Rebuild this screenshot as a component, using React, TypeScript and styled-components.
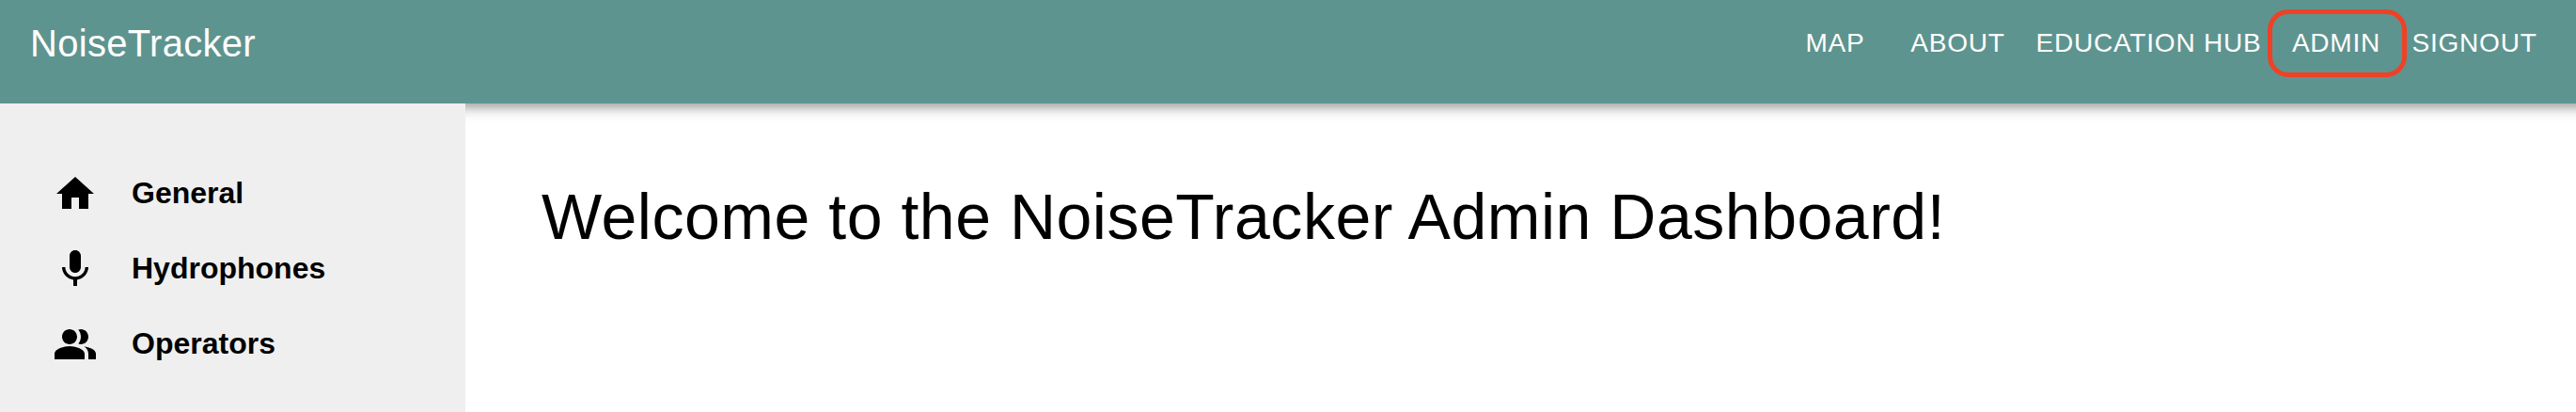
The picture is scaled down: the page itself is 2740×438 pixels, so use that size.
import React from "react";
import styled, { createGlobalStyle } from "styled-components";

const GlobalStyle = createGlobalStyle`
  * { box-sizing: border-box; }
  body {
    margin: 0;
    background: #fff;
    color: #000;
    font-family: "Liberation Sans", Helvetica, Arial, sans-serif;
    overflow: hidden;
  }
`;

const Page = styled.div`
  display: flex;
  flex-direction: column;
  height: 438px;
  overflow: hidden;
`;

const AppBar = styled.header`
  display: flex;
  align-items: flex-start;
  justify-content: space-between;
  height: 110px;
  flex: none;
  margin-right: -24px;
  padding: 10px 48px 0 32px;
  background: #5e948f;
  color: #fff;
  box-shadow: 0 4px 8px -2px rgba(0, 0, 0, 0.2), 0 8px 10px rgba(0, 0, 0, 0.14),
    0 2px 20px rgba(0, 0, 0, 0.12);
`;

const Brand = styled.div`
  font-size: 40px;
  line-height: 72px;
  letter-spacing: 0.3px;
  white-space: nowrap;
`;

const Nav = styled.nav`
  display: flex;
`;

const NavLink = styled.a<{ $width: number }>`
  position: relative;
  width: ${(p) => p.$width}px;
  height: 72px;
  line-height: 72px;
  font-size: 28px;
  letter-spacing: 0.8px;
  text-align: center;
  white-space: nowrap;
`;

const Highlight = styled.span`
  position: absolute;
  inset: 0 -12px 0 -10px;
  border: 5px solid #ee4126;
  border-radius: 22px;
`;

const Body = styled.div`
  display: flex;
  flex: 1;
`;

const Sidebar = styled.aside`
  position: relative;
  z-index: 1;
  width: 495px;
  padding: 56px 0 0 56px;
  background: #efefef;
`;

const MenuItem = styled.div`
  display: flex;
  align-items: center;
  gap: 36px;
  height: 80px;
  font-size: 32px;
  font-weight: 700;
`;

const MenuLabel = styled.span`
  padding-bottom: 2px;
`;

const Icon = styled.svg`
  width: 48px;
  height: 48px;
  fill: #000;
`;

const Main = styled.main`
  flex: 1;
  padding: 78px 0 0 81px;
`;

const Heading = styled.h1`
  margin: 0;
  font-size: 68px;
  font-weight: 400;
  line-height: 84px;
  letter-spacing: 0.52px;
  white-space: nowrap;
`;

const links = [
  { label: "MAP", width: 128 },
  { label: "ABOUT", width: 133 },
  { label: "EDUCATION HUB", width: 273 },
  { label: "ADMIN", width: 126, active: true },
  { label: "SIGNOUT", width: 168 },
];

const items = [
  { label: "General", d: "M10 20v-6h4v6h5v-8h3L12 3 2 12h3v8z" },
  {
    label: "Hydrophones",
    d: "M12 14c1.66 0 2.99-1.34 2.99-3L15 5c0-1.66-1.34-3-3-3S9 3.34 9 5v6c0 1.66 1.34 3 3 3zm5.3-3c0 3-2.54 5.1-5.3 5.1S6.7 14 6.7 11H5c0 3.41 2.72 6.23 6 6.72V21h2v-3.28c3.28-.48 6-3.3 6-6.72h-1.7z",
  },
  {
    label: "Operators",
    d: "M16.67 13.13C18.04 14.06 19 15.32 19 17v3h4v-3c0-2.18-3.57-3.47-6.33-3.87zM15 12c2.21 0 4-1.79 4-4s-1.79-4-4-4c-.47 0-.91.1-1.33.24C14.5 5.27 15 6.58 15 8s-.5 2.73-1.33 3.76c.42.14.86.24 1.33.24zM9 12c2.21 0 4-1.79 4-4s-1.79-4-4-4-4 1.79-4 4 1.79 4 4 4zM9 13c-2.67 0-8 1.34-8 4v3h16v-3c0-2.66-5.33-4-8-4z",
  },
];

export default function App() {
  return (
    <Page>
      <GlobalStyle />
      <AppBar>
        <Brand>NoiseTracker</Brand>
        <Nav>
          {links.map((l) => (
            <NavLink key={l.label} $width={l.width}>
              {l.label}
              {l.active && <Highlight />}
            </NavLink>
          ))}
        </Nav>
      </AppBar>
      <Body>
        <Sidebar>
          {items.map((i) => (
            <MenuItem key={i.label}>
              <Icon viewBox="0 0 24 24">
                <path d={i.d} />
              </Icon>
              <MenuLabel>{i.label}</MenuLabel>
            </MenuItem>
          ))}
        </Sidebar>
        <Main>
          <Heading>Welcome to the NoiseTracker Admin Dashboard!</Heading>
        </Main>
      </Body>
    </Page>
  );
}
